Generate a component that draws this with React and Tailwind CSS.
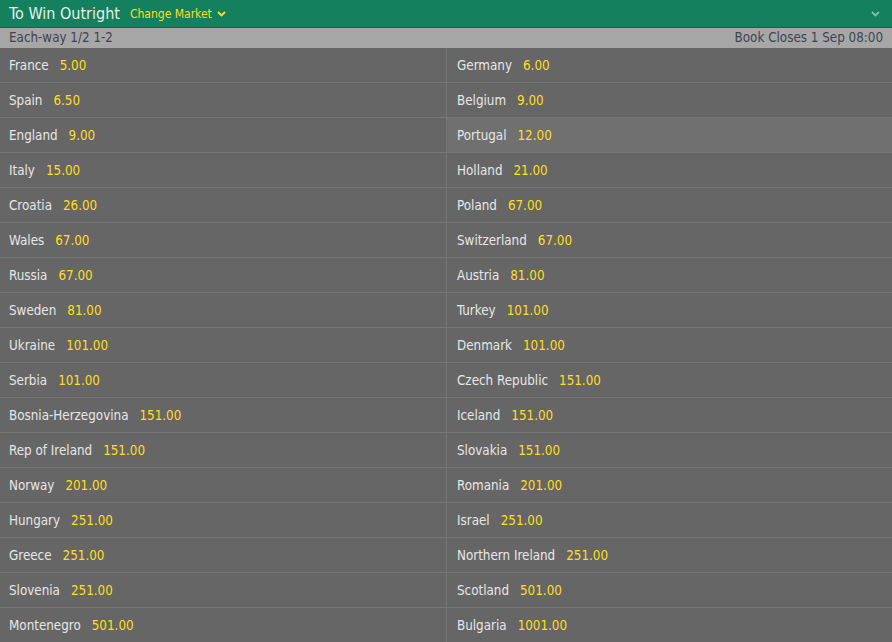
import React from "react";

const left = [
  ["France", "5.00"], ["Spain", "6.50"], ["England", "9.00"], ["Italy", "15.00"],
  ["Croatia", "26.00"], ["Wales", "67.00"], ["Russia", "67.00"], ["Sweden", "81.00"],
  ["Ukraine", "101.00"], ["Serbia", "101.00"], ["Bosnia-Herzegovina", "151.00"],
  ["Rep of Ireland", "151.00"], ["Norway", "201.00"], ["Hungary", "251.00"],
  ["Greece", "251.00"], ["Slovenia", "251.00"], ["Montenegro", "501.00"],
];
const right = [
  ["Germany", "6.00"], ["Belgium", "9.00"], ["Portugal", "12.00"], ["Holland", "21.00"],
  ["Poland", "67.00"], ["Switzerland", "67.00"], ["Austria", "81.00"], ["Turkey", "101.00"],
  ["Denmark", "101.00"], ["Czech Republic", "151.00"], ["Iceland", "151.00"],
  ["Slovakia", "151.00"], ["Romania", "201.00"], ["Israel", "251.00"],
  ["Northern Ireland", "251.00"], ["Scotland", "501.00"], ["Bulgaria", "1001.00"],
];

function Chevron({ className }) {
  return (
    <svg width="9" height="6" viewBox="0 0 9 6" className={className}>
      <path d="M1 1 L4.5 4.5 L8 1" fill="none" stroke="currentColor" strokeWidth="1.8" />
    </svg>
  );
}

function Cell({ name, odds, hl, rightCol }) {
  return (
    <div
      className={`h-[35px] pt-[2px] flex items-center border-b border-[#757575] ${
        rightCol ? "border-l border-l-[#757575] pl-[10px]" : "pl-[9px]"
      } ${hl ? "bg-[#707070]" : "bg-[#666666]"}`}
    >
      <span className="text-[#e6e6e6]">{name}</span>
      <span className="text-[#ffdf1b] ml-[11px]">{odds}</span>
    </div>
  );
}

export default function App() {
  return (
    <div
      className="w-[892px] h-[642px] overflow-hidden bg-[#666666] text-[13.3px]"
      style={{ fontFamily: "Tahoma, 'DejaVu Sans Condensed', 'DejaVu Sans', sans-serif" }}
    >
      <div className="h-[28px] bg-[#14805e] border-b border-[#0f6a4d] flex items-center pl-[9px] pr-[12px]">
        <span className="text-[16px] text-[#e8efe9]">To Win Outright</span>
        <span className="ml-[10px] text-[12px] text-[#ffdf1b] flex items-center gap-[5px]">
          Change Market <Chevron className="text-[#ffdf1b] mt-[1px]" />
        </span>
        <div className="flex-1" />
        <Chevron className="text-[#7fc0a8]" />
      </div>
      <div className="h-[20px] bg-[#a7a7a7] flex items-center justify-between px-[9px] text-[#3f4450]">
        <span>Each-way 1/2 1-2</span>
        <span>Book Closes 1 Sep 08:00</span>
      </div>
      <div className="grid grid-cols-[446px_446px]">
        {left.map((l, i) => (
          <React.Fragment key={i}>
            <Cell name={l[0]} odds={l[1]} />
            <Cell name={right[i][0]} odds={right[i][1]} hl={i === 2} rightCol />
          </React.Fragment>
        ))}
      </div>
    </div>
  );
}
